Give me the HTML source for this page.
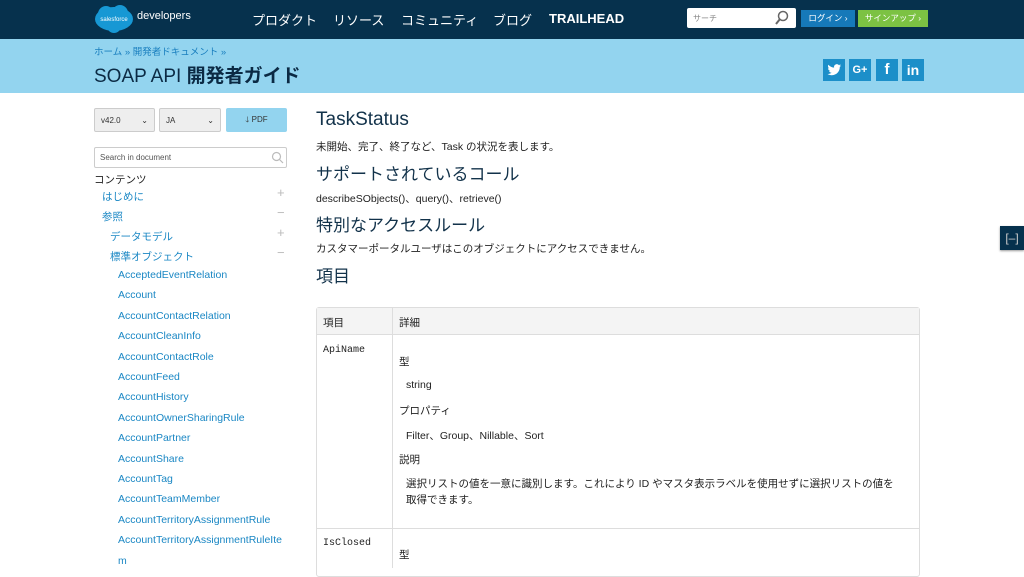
<!DOCTYPE html>
<html><head><meta charset="utf-8"><style>
*{margin:0;padding:0;box-sizing:border-box}
body{width:1024px;height:567px;overflow:hidden;background:#fff;font-family:"Liberation Sans","Noto Sans CJK JP",sans-serif;color:#222;position:relative}
.abs{position:absolute}
.hdr{left:0;top:0;width:1024px;height:39px;background:#06314d}
.nav{color:#fff;font-size:13px;top:10px}
.ban{left:0;top:39px;width:1024px;height:54px;background:#93d4ef}
.soc{top:59px;width:22px;height:22px;background:#1c8fc9;color:#fff;font-weight:bold;text-align:center;line-height:22px;font-size:15px}
.sel{top:108px;height:24px;border:1px solid #ccc;background:#eee;border-radius:2px;font-size:8px;padding:7px 6px;color:#333}
.side{font-size:10.5px;color:#1a87c4}
.c{font-size:10.5px;color:#222}
h2{font-weight:normal;font-size:17px;color:#12324a;position:absolute;left:316px}
.mono{font-family:"Liberation Mono",monospace;font-size:10px;color:#222}
</style></head><body>
<div class="abs hdr"></div>
<svg class="abs" style="left:94px;top:4px" width="40" height="30"><ellipse cx="20" cy="15" rx="19" ry="12" fill="#1798d4"/><circle cx="12" cy="10" r="8" fill="#1798d4"/><circle cx="26" cy="9" r="8" fill="#1798d4"/><circle cx="20" cy="22" r="7" fill="#1798d4"/><text x="20" y="17" font-size="6" fill="#fff" text-anchor="middle" font-family="Liberation Sans">salesforce</text></svg>
<div class="abs" style="left:137px;top:10px;color:#fff;font-size:11px">developers</div>
<div class="abs nav" style="left:252px">プロダクト</div>
<div class="abs nav" style="left:333px">リソース</div>
<div class="abs nav" style="left:401px">コミュニティ</div>
<div class="abs nav" style="left:493px">ブログ</div>
<div class="abs nav" style="left:549px;font-weight:bold;top:11px">TRAILHEAD</div>
<div class="abs" style="left:687px;top:8px;width:109px;height:20px;background:#fff;border-radius:2px;font-size:8px;color:#888;padding:5px 6px">サーチ</div>
<svg class="abs" style="left:774px;top:10px" width="16" height="16"><circle cx="9" cy="6" r="4.5" fill="none" stroke="#666" stroke-width="1.5"/><line x1="6" y1="9" x2="2" y2="14" stroke="#666" stroke-width="2"/></svg>
<div class="abs" style="left:801px;top:10px;width:54px;height:17px;background:#1679b9;color:#fff;font-size:8.5px;text-align:center;line-height:17px">ログイン ›</div>
<div class="abs" style="left:858px;top:10px;width:70px;height:17px;background:#7cc243;color:#fff;font-size:8.5px;text-align:center;line-height:17px">サインアップ ›</div>
<div class="abs ban"></div>
<div class="abs" style="left:94px;top:44px;font-size:9.5px;color:#1a7fbf">ホーム » 開発者ドキュメント »</div>
<div class="abs" style="left:94px;top:61px;font-size:19px;color:#0b2a44">SOAP API <b>開発者ガイド</b></div>
<div class="abs soc" style="left:823px"><svg width="22" height="22" viewBox="0 0 22 22"><path d="M18 6.5c-.5.2-1 .4-1.6.4.6-.3 1-.9 1.2-1.5-.5.3-1.1.5-1.7.7a2.8 2.8 0 0 0-4.8 2.5C8.8 8.500 6.8 7.400 5.4 5.700c-.8 1.300-.3 2.900.9 3.700-.5 0-.9-.1-1.300-.3 0 1.400 1 2.500 2.300 2.800-.4.1-.8.1-1.300 0 .4 1.100 1.400 1.900 2.600 1.900A5.600 5.600 0 0 1 4.500 15c1.200.8 2.700 1.200 4.300 1.200 5.200 0 8.100-4.400 8-8.300.5-.4 1-.9 1.200-1.400z" fill="#fff"/></svg></div>
<div class="abs soc" style="left:849px;font-size:11px">G+</div>
<div class="abs soc" style="left:876px">f</div>
<div class="abs soc" style="left:902px;font-size:14px">in</div>
<div class="abs sel" style="left:94px;width:61px">v42.0<span style="float:right">⌄</span></div>
<div class="abs sel" style="left:159px;width:62px">JA<span style="float:right">⌄</span></div>
<div class="abs" style="left:226px;top:108px;width:61px;height:24px;background:#93d4ef;border-radius:2px;font-size:8px;color:#333;text-align:center;line-height:24px">🡓 PDF</div>
<div class="abs" style="left:94px;top:147px;width:193px;height:21px;border:1px solid #ccc;border-radius:2px;font-size:8px;color:#555;padding:5px 5px">Search in document</div>
<svg class="abs" style="left:271px;top:151px" width="13" height="13"><circle cx="5.5" cy="5.5" r="4" fill="none" stroke="#bbb" stroke-width="1.2"/><line x1="8.5" y1="8.5" x2="12" y2="12" stroke="#bbb" stroke-width="1.2"/></svg>
<div class="abs c" style="left:94px;top:172px">コンテンツ</div>
<div class="abs side" style="left:102px;top:189px">はじめに</div>
<div class="abs side" style="left:102px;top:209px">参照</div>
<div class="abs side" style="left:110px;top:229px">データモデル</div>
<div class="abs side" style="left:110px;top:249px">標準オブジェクト</div>
<div class="abs" style="left:277px;top:185px;color:#bbb;font-size:13px">+</div>
<div class="abs" style="left:277px;top:205px;color:#bbb;font-size:13px">−</div>
<div class="abs" style="left:277px;top:225px;color:#bbb;font-size:13px">+</div>
<div class="abs" style="left:277px;top:245px;color:#bbb;font-size:13px">−</div>
<div class="abs side" style="left:118px;top:265px;line-height:20.4px;width:170px">AcceptedEventRelation<br>Account<br>AccountContactRelation<br>AccountCleanInfo<br>AccountContactRole<br>AccountFeed<br>AccountHistory<br>AccountOwnerSharingRule<br>AccountPartner<br>AccountShare<br>AccountTag<br>AccountTeamMember<br>AccountTerritoryAssignmentRule<br><span style="line-height:15px">AccountTerritoryAssignmentRuleIte<br>m</span></div>
<h2 style="top:109px;font-size:19px">TaskStatus</h2>
<div class="abs c" style="left:316px;top:139px">未開始、完了、終了など、Task の状況を表します。</div>
<h2 style="top:160px">サポートされているコール</h2>
<div class="abs c" style="left:316px;top:191px">describeSObjects()、query()、retrieve()</div>
<h2 style="top:211px">特別なアクセスルール</h2>
<div class="abs c" style="left:316px;top:241px">カスタマーポータルユーザはこのオブジェクトにアクセスできません。</div>
<h2 style="top:262px">項目</h2>
<div class="abs" style="left:316px;top:307px;width:604px;height:270px;border:1px solid #ddd;border-radius:3px"></div>
<div class="abs" style="left:317px;top:308px;width:602px;height:27px;background:#f4f4f4;border-bottom:1px solid #ddd"></div>
<div class="abs" style="left:392px;top:308px;width:1px;height:260px;background:#ddd"></div>
<div class="abs" style="left:317px;top:528px;width:602px;height:1px;background:#ddd"></div>
<div class="abs c" style="left:323px;top:315px">項目</div>
<div class="abs c" style="left:399px;top:315px">詳細</div>
<div class="abs mono" style="left:323px;top:345px">ApiName</div>
<div class="abs c" style="left:399px;top:354px">型</div>
<div class="abs c" style="left:406px;top:379px">string</div>
<div class="abs c" style="left:399px;top:403px">プロパティ</div>
<div class="abs c" style="left:406px;top:428px">Filter、Group、Nillable、Sort</div>
<div class="abs c" style="left:399px;top:452px">説明</div>
<div class="abs c" style="left:406px;top:476px;width:490px;line-height:16px">選択リストの値を一意に識別します。これにより ID やマスタ表示ラベルを使用せずに選択リストの値を<br>取得できます。</div>
<div class="abs mono" style="left:323px;top:538px">IsClosed</div>
<div class="abs c" style="left:399px;top:547px">型</div>
<div class="abs" style="left:1000px;top:226px;width:24px;height:24px;background:#06314d;color:#ccc;font-size:12px;line-height:24px;text-align:center;box-shadow:0 1px 2px #999">[–]</div>
</body></html>
